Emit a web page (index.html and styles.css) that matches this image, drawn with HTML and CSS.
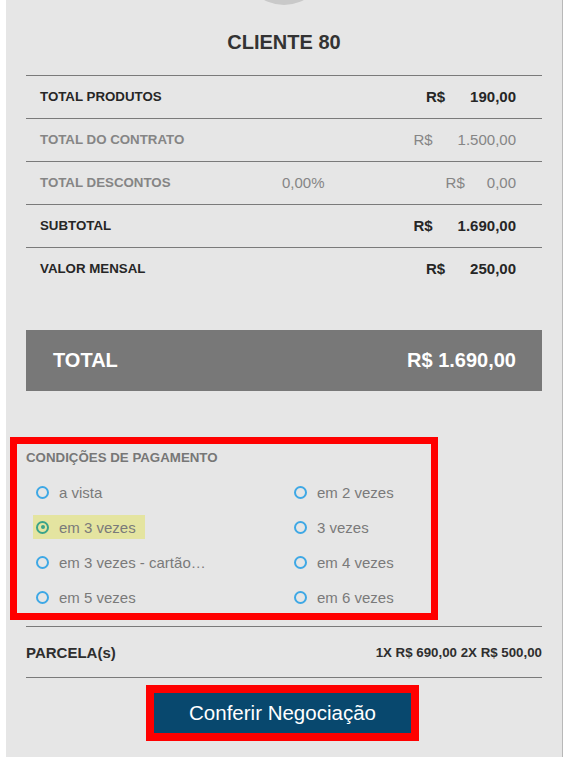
FILE: index.html
```html
<!DOCTYPE html>
<html lang="pt-BR">
<head>
<meta charset="utf-8">
<title>Cliente 80</title>
<link rel="stylesheet" href="styles.css">
</head>
<body>
<div class="panel">
  <div class="avatar"></div>
  <h1 class="title">CLIENTE 80</h1>

  <div class="summary">
    <div class="row strong">
      <span class="label">TOTAL PRODUTOS</span>
      <span class="pct"></span>
      <span class="money"><span>R$</span><span>190,00</span></span>
    </div>
    <div class="row muted">
      <span class="label">TOTAL DO CONTRATO</span>
      <span class="pct"></span>
      <span class="money"><span>R$</span><span>1.500,00</span></span>
    </div>
    <div class="row muted">
      <span class="label">TOTAL DESCONTOS</span>
      <span class="pct">0,00%</span>
      <span class="money tight"><span>R$</span><span>0,00</span></span>
    </div>
    <div class="row strong">
      <span class="label">SUBTOTAL</span>
      <span class="pct"></span>
      <span class="money"><span>R$</span><span>1.690,00</span></span>
    </div>
    <div class="row strong last">
      <span class="label">VALOR MENSAL</span>
      <span class="pct"></span>
      <span class="money"><span>R$</span><span>250,00</span></span>
    </div>
  </div>

  <div class="total-bar">
    <span>TOTAL</span>
    <span>R$&nbsp;1.690,00</span>
  </div>

  <div class="payment">
    <div class="payment-title">CONDIÇÕES DE PAGAMENTO</div>
    <div class="options">
      <label class="option"><span class="radio"></span><span>a vista</span></label>
      <label class="option"><span class="radio"></span><span>em 2 vezes</span></label>
      <label class="option selected"><span class="radio"></span><span>em 3 vezes</span></label>
      <label class="option"><span class="radio"></span><span>3 vezes</span></label>
      <label class="option"><span class="radio"></span><span>em 3 vezes - cartão…</span></label>
      <label class="option"><span class="radio"></span><span>em 4 vezes</span></label>
      <label class="option"><span class="radio"></span><span>em 5 vezes</span></label>
      <label class="option"><span class="radio"></span><span>em 6 vezes</span></label>
    </div>
  </div>

  <div class="parcelas">
    <span class="parcelas-label">PARCELA(s)</span>
    <span class="parcelas-value">1X R$ 690,00 2X R$ 500,00</span>
  </div>

  <div class="actions">
    <button class="btn" type="button">Conferir Negociação</button>
  </div>
</div>
</body>
</html>
```
FILE: styles.css
```css
html, body {
  margin: 0;
  padding: 0;
  background: #ffffff;
}

body {
  font-family: "Liberation Sans", Arial, sans-serif;
  overflow: hidden;
}

.panel {
  margin-left: 6px;
  width: 557px;
  background: #e6e6e6;
  border-right: 1px solid #b8b8b8;
  padding: 0 20px 16px 20px;
  box-sizing: border-box;
}

.avatar {
  width: 84px;
  height: 84px;
  border-radius: 50%;
  background: #c9c9c9;
  margin: -79px auto 0;
}

.title {
  margin: 26px 0 0;
  font-size: 20px;
  line-height: 23px;
  font-weight: bold;
  color: #333333;
  text-align: center;
  padding-bottom: 21px;
  border-bottom: 1px solid #7a7a7a;
}

.row {
  display: grid;
  grid-template-columns: 242px 1fr auto;
  align-items: center;
  height: 42px;
  box-sizing: content-box;
  padding: 0 26px 0 14px;
  border-bottom: 1px solid #7a7a7a;
}

.row > span {
  position: relative;
  top: -1px;
}

.row.last {
  border-bottom: none;
}

.label {
  font-size: 13.3px;
  font-weight: bold;
}

.pct {
  font-size: 15px;
}

.money {
  display: flex;
  gap: 25px;
  font-size: 15px;
}

.money.tight {
  gap: 22px;
}

.row.strong {
  color: #262626;
}

.row.strong .money {
  font-weight: bold;
}

.row.muted {
  color: #858585;
}

.total-bar {
  margin-top: 40px;
  height: 61px;
  background: #787878;
  color: #ffffff;
  display: flex;
  justify-content: space-between;
  align-items: center;
  padding: 0 26px 0 27px;
  font-size: 20px;
  font-weight: bold;
}

.payment {
  margin: 46px 0 0 -16px;
  width: 428px;
  box-sizing: border-box;
  border: 7px solid #ff0000;
  padding: 6px 0 3px 9px;
}

.payment-title {
  font-size: 13.3px;
  line-height: 16px;
  font-weight: bold;
  color: #777777;
}

.options {
  margin: 14px 0 1px 7px;
  display: grid;
  grid-template-columns: 258px auto;
  row-gap: 11px;
  justify-items: start;
}

.option {
  display: inline-flex;
  align-items: center;
  gap: 10px;
  height: 24px;
  padding: 0 9px 0 3px;
  font-size: 15px;
  color: #7a7a7a;
}

.option.selected {
  background: #e4e4a0;
}

.radio {
  width: 13px;
  height: 13px;
  border: 2px solid #3ea8e5;
  border-radius: 50%;
  box-sizing: border-box;
  position: relative;
}

.option.selected .radio {
  border-color: #3aa38a;
}

.option.selected .radio::after {
  content: "";
  position: absolute;
  left: 2.5px;
  top: 2.5px;
  width: 4px;
  height: 4px;
  border-radius: 50%;
  background: #3aa38a;
}

.parcelas {
  margin-top: 6px;
  height: 50px;
  border-top: 1px solid #7a7a7a;
  border-bottom: 1px solid #7a7a7a;
  display: flex;
  justify-content: space-between;
  align-items: center;
  color: #2e2e2e;
  font-weight: bold;
}

.parcelas-label {
  font-size: 15px;
}

.parcelas-value {
  font-size: 13.3px;
}

.actions {
  display: flex;
  justify-content: center;
  margin-top: 7px;
  padding-right: 3px;
}

.btn {
  width: 273px;
  height: 56px;
  border: 8px solid #ff0000;
  background: #08486e;
  color: #ffffff;
  font-family: "Liberation Sans", Arial, sans-serif;
  font-size: 20.5px;
  padding: 0;
  margin: 0;
}
```
